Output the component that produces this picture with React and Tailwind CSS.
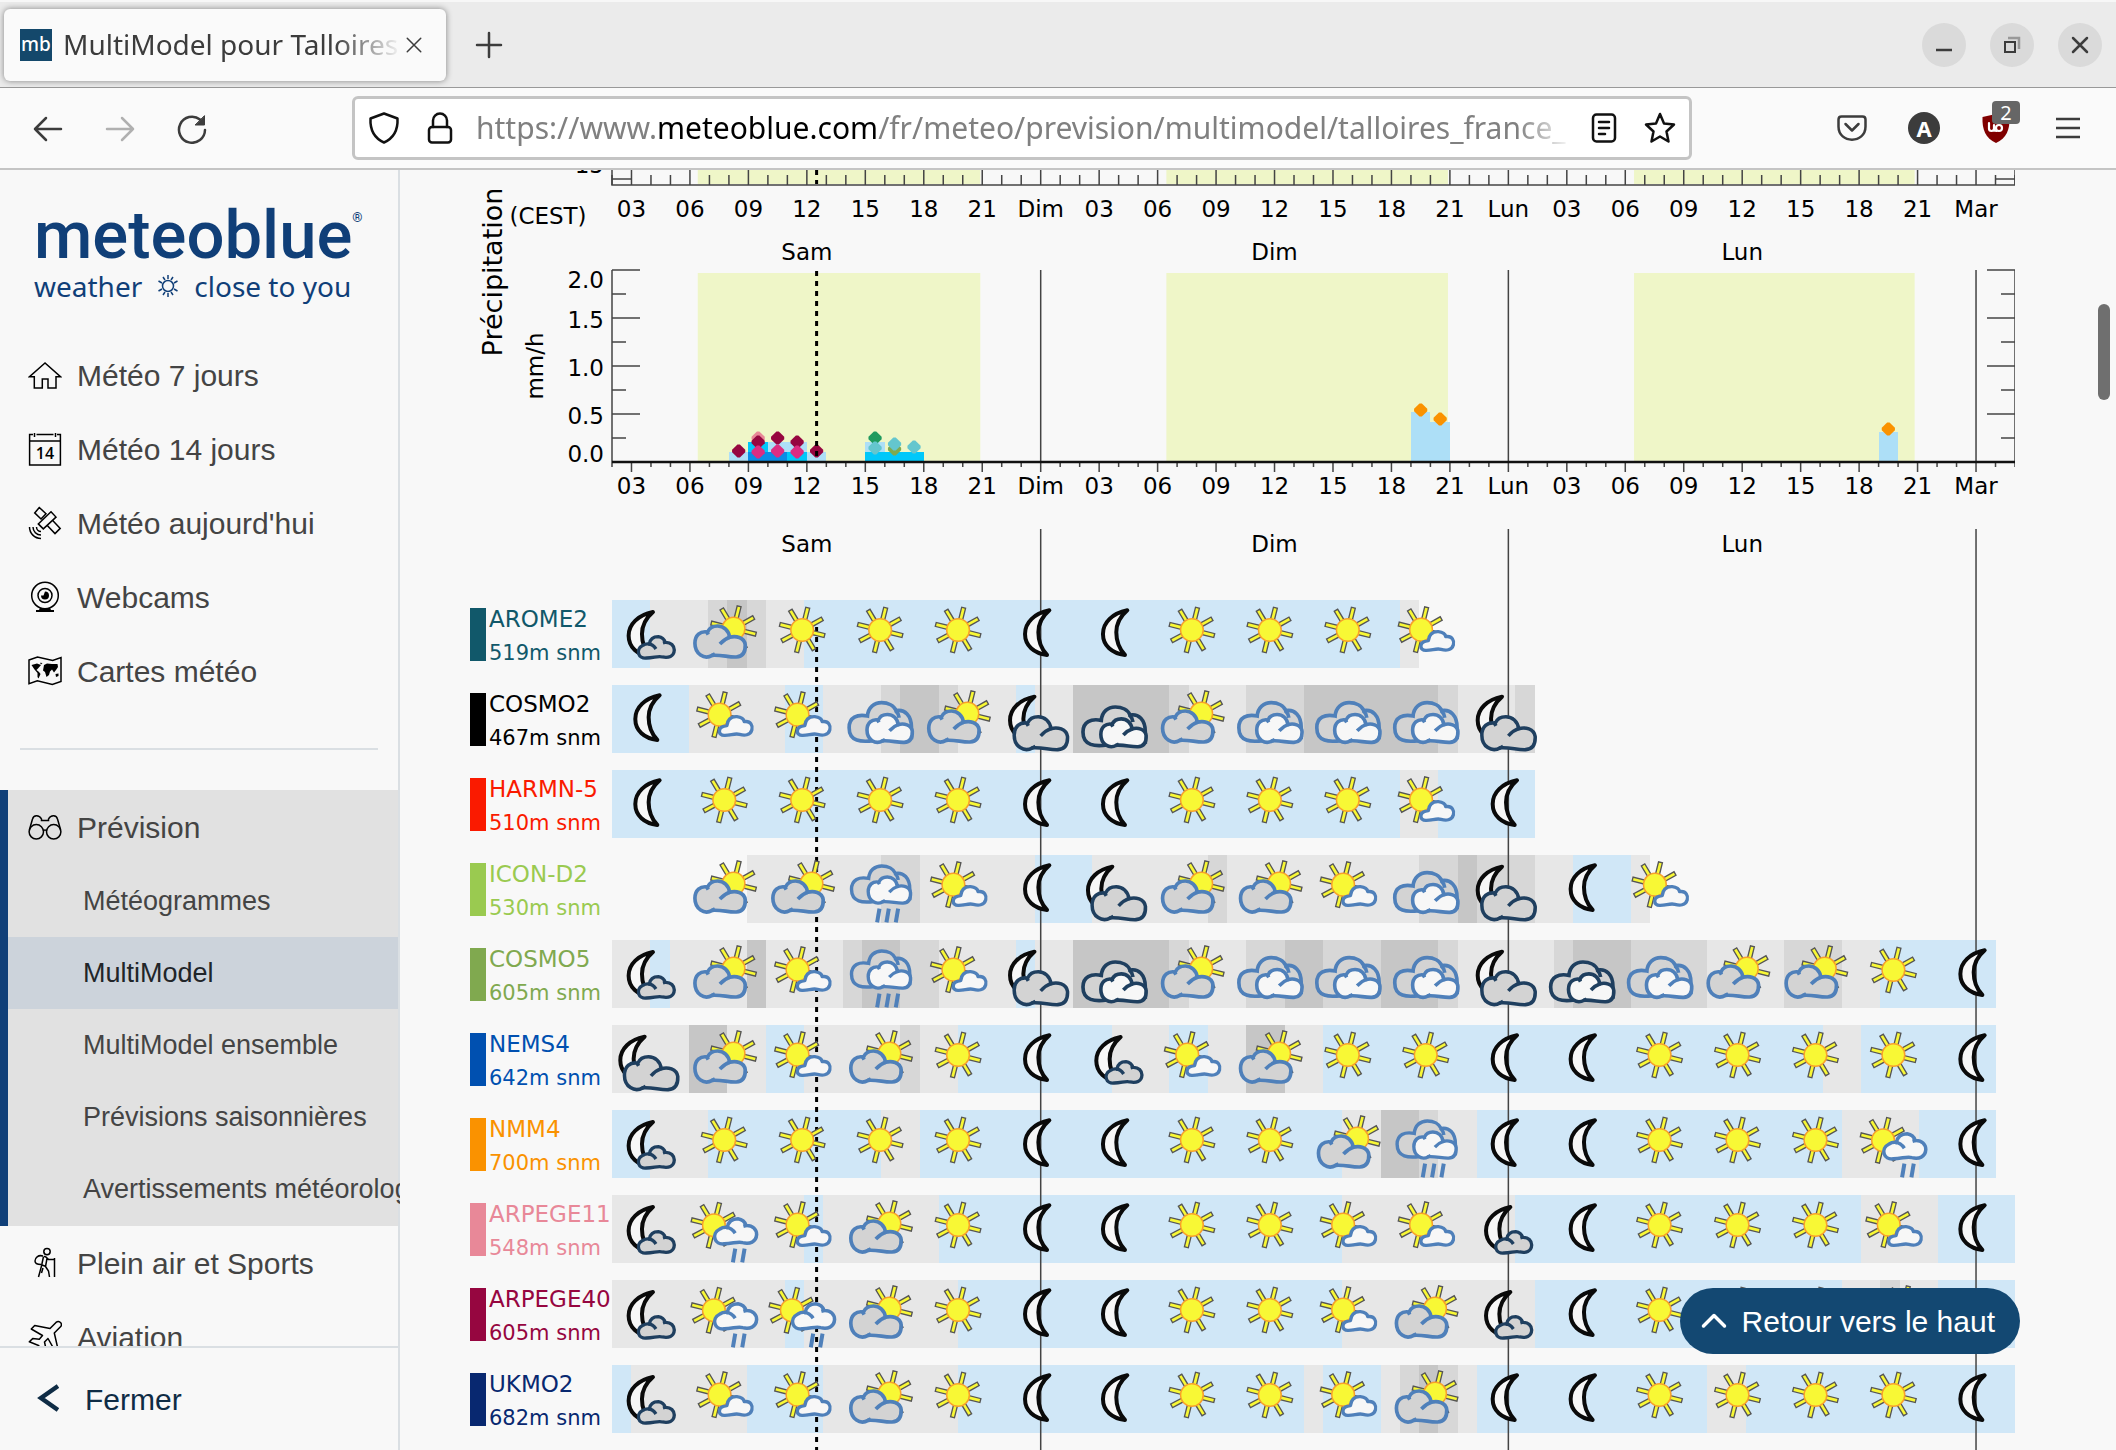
import React from "react";

const HOUR = 1403 / 72;
const hx = (h) => 142 + (h - 2) * HOUR;

const SKY = {
  B: "bg-[#d0e7f7]",
  L: "bg-[#e7e7e7]",
  M: "bg-[#d7d7d7]",
  D: "bg-[#c6c6c6]",
  N: "bg-transparent",
};

const MODELS = [
  { name: "AROME2", alt: "519m snm", text: "text-[#11586a]", fill: "bg-[#11586a]",
    sky: "B2 L5 M6 D7 M8 L10 B41 L42", icons: "mc cs s s s m m s s s sc" },
  { name: "COSMO2", alt: "467m snm", text: "text-black", fill: "bg-black",
    sky: "B4 L9 B11 L14 M15 D17 M18 L21 B22 L24 D29 M30 L33 M36 D43 M44 L47 M48",
    icons: "m sc sc oc cs Mc on cs oc oc oc Mc" },
  { name: "HARMN-5", alt: "510m snm", text: "text-[#fa1a00]", fill: "bg-[#fa1a00]",
    sky: "B41 L43 B48", icons: "m s s s s m m s s s sc m" },
  { name: "ICON-D2", alt: "530m snm", text: "text-[#9aca50]", fill: "bg-[#9aca50]",
    sky: "N7 L14 M16 L22 B25 L31 M32 L42 M44 D45 M48 L50 B53 L54",
    icons: "- cs cs r sc m Mc cs cs sc oc Mc m sc" },
  { name: "COSMO5", alt: "605m snm", text: "text-[#80a94f]", fill: "bg-[#80a94f]",
    sky: "L2 B3 L7 D8 L12 M13 D15 M17 L21 B22 L24 D29 M30 L33 M35 D37 M40 D43 M44 L49 M50 D53 M57 L61 M64 L66 B72",
    icons: "mc cs sc r sc Mc on cs oc oc oc Mc on oc cs cs s m" },
  { name: "NEMS4", alt: "642m snm", text: "text-[#0050b0]", fill: "bg-[#0050b0]",
    sky: "L4 D6 L8 B10 L15 M16 L18 B26 L29 B31 L33 D35 L37 B63 L65 B72",
    icons: "Mc cs sc cs s m mc sc cs s s m m s s s s m" },
  { name: "NMM4", alt: "700m snm", text: "text-[#fa9200]", fill: "bg-[#fa9200]",
    sky: "B2 L5 B14 L16 B38 L40 D42 M43 L45 B64 L68 B72",
    icons: "mc s s s s m m s s cs r m m s s s sr m" },
  { name: "ARPEGE11", alt: "548m snm", text: "text-[#e88898]", fill: "bg-[#e88898]",
    sky: "L10 B11 L17 B38 L47 B65 L69 B73",
    icons: "mc sr sc cs s m m s s sc sc mc m s s s sc m" },
  { name: "ARPEGE40", alt: "605m snm", text: "text-[#960640]", fill: "bg-[#960640]",
    sky: "L9 B10 L18 B38 L48 B64 L66 M67 L69 B73",
    icons: "mc sr sr cs s m m s s sc cs mc m s s s cs m" },
  { name: "UKMO2", alt: "682m snm", text: "text-[#082870]", fill: "bg-[#082870]",
    sky: "B1 L7 B11 L18 B36 L37 B40 L41 M42 D43 M44 L45 B57 L59 B73",
    icons: "mc sc sc cs s m m s s sc cs m m s s s s m" },
];

/* Weather pictograms: drawn in a 200-unit grid, one third of a pixel per unit. */
const DAY = "#4f80ba";
const NIGHT = "#1f3f5f";

const Sun = ({ x = 0, y = 0 }) => (
  <g transform={`translate(${x} ${90 + y})`}>
    {[14, 61, 104, 149, 194, 242, 284, 329].map((a) => (
      <rect key={a} x="-6" y="-69" width="12" height="38" transform={`rotate(${a})`} fill="#f8f835" stroke="#555" strokeWidth="4" />
    ))}
    <circle r="34" fill="#f8f835" stroke="#f9a12a" strokeWidth="4.5" />
  </g>
);
const Moon = ({ x = 0, y = 0 }) => (
  <path
    transform={`translate(${x} ${y})`}
    d="M40 31C-4 40-33 67-33 102C-33 137-6 160 33 165C16 147 7 122 7 97C7 72 18 50 40 31Z"
    fill="#f7f7f7" stroke="#0a0a0a" strokeWidth="12" strokeLinejoin="round"
  />
);
const BigCloud = ({ t, stroke, fill = "#d3d3d3", w = 11 }) => (
  <g transform={t} fill={fill} stroke={stroke} strokeWidth={w} strokeLinecap="butt" strokeLinejoin="round">
    <path d="M-36 166C-60 180-88 162-88 130C-88 106-72 92-50 96C-44 82-32 78-20 78C-2 78 14 91 16 112C34 106 60 112 63 134C64 158 56 170 36 171C12 172-8 164-36 166Z" />
    <path d="M18 111C6 115-4 122-13 132M-53 95L-48 104M-38 167L-28 162" fill="none" />
  </g>
);
const CurlCloud = ({ t, stroke, fill, w }) => (
  <g transform={t} fill={fill} stroke={stroke} strokeWidth={w} strokeLinejoin="round">
    <path d="M1 174C-24 178-34 148-10 136C-4 132 4 131 9 132C12 115 24 110 36 110C48 112 54 118 57 127C74 126 84 138 84 150C83 170 66 175 48 171C36 167 22 174 1 174Z" />
    <path d="M6 132C16 132 24 139 29 147M50 129L60 126" fill="none" />
  </g>
);
const SmallCloud = () => (
  <path
    d="M2 151C-20 153-22 124 8 122C10 102 22 94 38 95C50 96 58 100 60 110C80 106 86 124 83 134C78 152 60 152 46 148C32 144 20 151 2 151Z"
    fill="#f7f7f7" stroke={DAY} strokeWidth="10" strokeLinejoin="round"
  />
);
const Overcast = ({ t, stroke }) => (
  <g transform={t}>
    <g fill="#d3d3d3" stroke={stroke} strokeWidth="11">
      <path d="M-20 167C-56 172-93 170-93 128C-93 97-69 87-38 93C-36 67-18 53 4 53C24 53 42 62 48 77C74 72 94 92 94 127L94 158Z" />
      <path d="M46 76C53 83 56 90 57 98" fill="none" />
    </g>
    <BigCloud t="translate(29 129) scale(.9) translate(12 -123)" stroke={stroke} fill="#f7f7f7" w="12" />
  </g>
);
const Rain = ({ xs }) => (
  <g stroke={DAY} strokeWidth="12">
    {xs.map((x) => <path key={x} d={`M${x} 161l-7 41`} />)}
  </g>
);

const ICONS = {
  s: <Sun />,
  m: <Moon />,
  sc: <><Sun x={-14} y={-1} /><SmallCloud /></>,
  cs: <><Sun x={28} y={-4} /><BigCloud stroke={DAY} /></>,
  mc: <><Moon x={-20} y={5} /><CurlCloud stroke={NIGHT} fill="#d3d3d3" w="10" /></>,
  Mc: <><Moon x={-45} y={4} /><BigCloud t="translate(15 143) scale(1.06) translate(12 -123)" stroke={NIGHT} w="10" /></>,
  oc: <Overcast stroke={DAY} />,
  on: <Overcast stroke={NIGHT} t="translate(0 13)" />,
  r: <><Overcast stroke={DAY} t="translate(2 88) scale(.935) translate(-1 -112)" /><Rain xs={[-2, 26, 54]} /></>,
  sr: <><Sun x={-31} y={1} /><CurlCloud t="translate(34 109) scale(1.17) translate(-30 -142)" stroke={DAY} fill="#f7f7f7" w="9" /><Rain xs={[33, 61]} /></>,
};

function ModelRow({ model }) {
  let prev = 0;
  const segments = model.sky.split(" ").map((s) => {
    const end = Number(s.slice(1));
    const seg = { tone: s[0], span: end - prev, end };
    prev = end;
    return seg;
  });
  return (
    <li className="flex h-[85px] items-start">
      <div className="flex w-[142px] shrink-0 whitespace-nowrap">
        <span className={`mt-2 mr-[3px] h-[53px] w-4 shrink-0 ${model.fill}`} />
        <p className={`mt-0.5 leading-[34px] ${model.text}`}>
          <span className="block text-[23px]">{model.name}</span>
          <span className="block text-[21px]">{model.alt}</span>
        </p>
      </div>
      <div className="relative h-[68px] flex-1">
        <div className="flex h-full">
          {segments.map((s) => (
            <span key={s.end} className={SKY[s.tone]} style={{ width: `${(s.span / 73) * 100}%` }} />
          ))}
        </div>
        <svg viewBox="0 0 1403 68" className="absolute inset-0 z-20 h-full w-full overflow-visible" aria-hidden="true">
          {model.icons.split(" ").map((id, i) => (
            <g key={i} transform={`translate(${34.3 + i * HOUR * 4} 0) scale(.3333)`}>{ICONS[id]}</g>
          ))}
        </svg>
      </div>
    </li>
  );
}

const HOURS = Array.from({ length: 73 }, (_, i) => i + 2);
const DAY_NAMES = { 24: "Dim", 48: "Lun", 72: "Mar" };
const hourLabel = (h) => DAY_NAMES[h] || String(h % 24).padStart(2, "0");
const DAYLIGHT = [[6.4, 20.9], [30.45, 44.9], [54.45, 68.85]];
const BARS = [
  [8, 10, "#addff7"], [9, 20, "#00c8fa"], [10, 20, "#addff7"], [11, 20, "#addff7"],
  [9, 10, "#0a8ce6"], [10, 10, "#0a8ce6"], [11, 10, "#00c8fa"], [12, 10, "#addff7"],
  [15, 20, "#addff7"], [15, 10, "#00c8fa"], [16, 10, "#00c8fa"], [17, 10, "#00c8fa"],
  [43, 50, "#addff7"], [44, 40, "#addff7"], [67, 30, "#addff7"],
];
const POINTS = [
  [8.5, 281, "#960640"], [9.5, 268, "#e88898"], [9.5, 272, "#960640"], [9.5, 282, "#dc2d82"],
  [10.5, 268, "#960640"], [10.5, 281, "#dc2d82"], [11.5, 272, "#960640"], [11.5, 282, "#dc2d82"],
  [12.5, 281, "#960640"], [15.5, 268, "#1f9a5f"], [15.5, 278, "#64c6ce"], [16.5, 279, "#80a94f"],
  [16.5, 274, "#64c6ce"], [17.5, 277, "#64c6ce"],
  [43.5, 240, "#fa9200"], [44.5, 249, "#fa9200"], [67.5, 259, "#fa9200"],
];

function PrecipitationChart() {
  return (
    <svg viewBox="0 0 1545 430" className="block w-full" fontSize="23" role="img" aria-label="Précipitation">
      {DAYLIGHT.map(([a, b]) => (
        <g key={a} fill="#eff6c8">
          <rect x={hx(a)} y="0" width={(b - a) * HOUR} height="14" />
          <rect x={hx(a)} y="103" width={(b - a) * HOUR} height="188" />
        </g>
      ))}
      {BARS.map(([h, v, c], i) => (
        <rect key={i} x={hx(h)} y={292 - v} width={HOUR} height={v} fill={c} shapeRendering="crispEdges" />
      ))}
      {POINTS.map(([h, y, c], i) => (
        <path key={i} transform={`translate(${hx(h)} ${y})`} d="M-1.2-6.6H1.2L6.6-1.2V1.2L1.2 6.6H-1.2L-6.6 1.2V-1.2Z" fill={c} />
      ))}
      <path d={`M${hx(12.5)} 0V14M${hx(12.5)} 101V292`} stroke="#000" strokeWidth="3" strokeDasharray="5 5" />
      <g stroke="#444" strokeWidth="1.5" fill="none">
        <path d="M142 0V15H1545V0M142 9H162M1525 9H1545" />
        {HOURS.map((h) => (
          <path key={h} d={h % 3 ? `M${hx(h)} 5V15M${hx(h)} 292V297` : `M${hx(h)} 0V15M${hx(h)} 292V302`} />
        ))}
        <path d="M142 100V292M1545 100V292" />
        {[100, 124, 148, 172, 196, 220, 244, 268].map((y, i) => (
          <path key={y} d={i % 2 ? `M142 ${y}H156M1531 ${y}H1545` : `M142 ${y}H170M1517 ${y}H1545`} />
        ))}
        {[24, 48, 72].map((h) => <path key={h} d={`M${hx(h)} 100V292M${hx(h)} 359V430`} />)}
      </g>
      <path d="M142 292H1545" stroke="#111" strokeWidth="2.5" />
      <g textAnchor="middle">
        {HOURS.filter((h) => h % 3 === 0).map((h) => (
          <React.Fragment key={h}>
            <text x={hx(h)} y="47">{hourLabel(h)}</text>
            <text x={hx(h)} y="324">{hourLabel(h)}</text>
          </React.Fragment>
        ))}
        {["Sam", "Dim", "Lun"].map((d, i) => (
          <React.Fragment key={d}>
            <text x={hx(12 + i * 24)} y="90">{d}</text>
            <text x={hx(12 + i * 24)} y="382">{d}</text>
          </React.Fragment>
        ))}
        <text x="78" y="54">(CEST)</text>
        <text transform="translate(32 102) rotate(-90)" fontSize="27">Précipitation</text>
        <text transform="translate(73 196) rotate(-90)">mm/h</text>
      </g>
      <g textAnchor="end">
        <text x="134" y="3">15</text>
        <text x="134" y="118">2.0</text>
        <text x="134" y="158">1.5</text>
        <text x="134" y="206">1.0</text>
        <text x="134" y="254">0.5</text>
        <text x="134" y="292">0.0</text>
      </g>
    </svg>
  );
}

function Meteogram() {
  return (
    <section className="pr-[101px] pl-[70px] font-['DejaVu_Sans',sans-serif] text-black">
      <PrecipitationChart />
      <div className="relative">
        <svg className="absolute inset-y-0 right-0 left-[142px] z-10 h-full w-[calc(100%-142px)]" aria-hidden="true">
          {["30.556%", "63.889%", "97.222%"].map((x) => (
            <line key={x} x1={x} x2={x} y1="0" y2="100%" stroke="#444" strokeWidth="1.5" />
          ))}
          <line x1="14.583%" x2="14.583%" y1="27" y2="100%" stroke="#000" strokeWidth="3" strokeDasharray="5 5" />
        </svg>
        <ul>{MODELS.map((m) => <ModelRow key={m.name} model={m} />)}</ul>
      </div>
    </section>
  );
}

const NavSvg = ({ children }) => (
  <svg viewBox="0 0 34 34" className="h-[34px] w-[34px] shrink-0" fill="none" stroke="#000" strokeWidth="1.5" aria-hidden="true">
    {children}
  </svg>
);
const NAV = {
  home: <path d="M17 5L1.5 18.7H6.3V30H14.3V21H20V30H28V18.7H32.5Z" />,
  cal: (
    <>
      <path d="M5 2.5H1.6V33H32.4V2.5H29M8.5 2.5H25.5M1.6 9H32.4M6.5 1V5M27.5 1V5" />
      <text x="17" y="26.5" textAnchor="middle" fontSize="16" fontWeight="600" fill="#000" stroke="none" className="font-['Open_Sans',sans-serif]">14</text>
    </>
  ),
  sat: (
    <path d="M11.3 1.5L6.7 6.9L13 13L18 7.7ZM23 5.8L28 11.1L15.3 22.9L10.3 17.9ZM24.7 14.5L32.2 22.4L27 27.6L19.5 19.7M8.5 21A4.5 4.5 0 0 0 13 25.5M5 21A8 8 0 0 0 13 29M1.5 21A11.5 11.5 0 0 0 13 32.5" />
  ),
  cam: (
    <>
      <circle cx="17" cy="15.5" r="13.3" />
      <circle cx="17" cy="15.5" r="7" />
      <path d="M17 11.5A4 4 0 1 1 13 15.5L15.5 15.5Z" fill="#000" stroke="none" />
      <path d="M12 28H22L23 30H26V32H8V30H11Z" fill="#000" stroke="none" />
    </>
  ),
  map: (
    <>
      <path d="M1 6L9.5 3L24.7 6.5L33 3.5V27.5L24.3 30.5L9.3 26.8L1 29.7Z" />
      <path d="M3.5 11L9 9.5L13 11L10 14.5L8.5 16L11 18L12.5 20L10.5 24.5L9.5 23V19L6.5 15.5ZM16 11L19 9.5L24 10L29.5 10L30 13L28 16L26 18.5L24 15.5L22 17.5L21 21L18.5 23L17 18L15 16.5ZM27.5 20L30.5 19.5V22L28 23ZM12 8.8L14.5 9L13 10.5Z" fill="#000" stroke="none" />
    </>
  ),
  bino: (
    <>
      <circle cx="8.3" cy="21.8" r="7.2" />
      <circle cx="25.7" cy="21.8" r="7.2" />
      <path d="M1.5 19.5L4.5 9C5.5 5 11 4.5 13.5 9V10.5H20.5V9C23 4.5 28.5 5 29.5 9L32.5 19.5M15.5 20.5Q17 19.5 18.5 20.5" />
    </>
  ),
  hike: (
    <>
      <circle cx="19" cy="5.6" r="3.2" />
      <path d="M15 10C10 8.5 7 12 7 15C7 17.5 10 18.5 13 18.5M15.5 10.5L13.5 20L10.5 31M16 10.5C18 10 19 12 20.5 13.5H26.5M26.5 12V31M19 12.5L17.5 20.5L20.5 25L21.5 31M14 19L18 20.5M15 22L13.5 27" />
    </>
  ),
  plane: (
    <path d="M22 8.6L28 2.4C31 0 34.5 3 33 6.3L26.3 13L29.5 27L26.5 30L20 18.5L16.5 22L18 29L15.5 31.5L10.5 25.5L1.3 21.8L4.7 18.6L11.3 19.3L14.5 15.5L3.3 9L6.7 5.4Z" strokeLinejoin="round" />
  ),
};

const NavLink = ({ icon, children }) => (
  <a href="#" className="flex h-[74px] items-center gap-[15px] pl-7 text-[30px]">
    <NavSvg>{NAV[icon]}</NavSvg>
    {children}
  </a>
);

function Sidebar() {
  return (
    <aside className="flex w-[400px] shrink-0 flex-col overflow-hidden bg-[#f8f8f8] font-['Liberation_Sans',Arial,sans-serif] whitespace-nowrap text-[#444] shadow-[inset_-2px_0_0_#dadfe3]">
      <div className="min-h-0 flex-1 overflow-hidden">
        <a href="#" aria-label="meteoblue" className="block h-[168px] pt-[26px] pl-[34px] text-[#103f78]">
          <span className="flex items-start font-['Roboto',sans-serif] text-[67px] leading-[78px] font-medium">
            meteoblue
            <span className="mt-3 text-[13px] leading-[20px]">®</span>
          </span>
          <span className="flex items-center font-['Noto_Sans',sans-serif] text-[28px] leading-[20px]">
            weather
            <svg viewBox="0 0 24 24" className="mx-3.5 h-6 w-6" fill="none" stroke="#103f78" strokeWidth="1.5" aria-hidden="true">
              <circle cx="12" cy="12" r="5.5" />
              <path d="M12 1V5M12 19V23M2.5 7L6 9M18 15L21.5 17M2.5 17L6 15M18 9L21.5 7M7 3L9 6M15 18L17 21M17 3L15 6M9 18L7 21" />
            </svg>
            close to you
          </span>
        </a>
        <nav>
          <NavLink icon="home">Météo 7 jours</NavLink>
          <NavLink icon="cal">Météo 14 jours</NavLink>
          <NavLink icon="sat">Météo aujourd'hui</NavLink>
          <NavLink icon="cam">Webcams</NavLink>
          <NavLink icon="map">Cartes météo</NavLink>
          <hr className="mr-[22px] ml-5 mt-10 mb-10 border-t-2 border-[#dadfe3]" />
          <div className="mr-0.5 border-l-8 border-[#103f78] bg-[#e1e1e1] pb-px">
            <div className="-ml-2">
              <NavLink icon="bino">Prévision</NavLink>
            </div>
            <ul className="pt-px text-[27px] leading-[72px]">
              <li><a href="#" className="block pl-[75px]">Météogrammes</a></li>
              <li><a href="#" aria-current="page" className="block bg-[#ccd3db] pl-[75px] text-[#212529]">MultiModel</a></li>
              <li><a href="#" className="block pl-[75px]">MultiModel ensemble</a></li>
              <li><a href="#" className="block pl-[75px]">Prévisions saisonnières</a></li>
              <li><a href="#" className="block pl-[75px]">Avertissements météorologiques</a></li>
            </ul>
          </div>
          <NavLink icon="hike">Plein air et Sports</NavLink>
          <NavLink icon="plane">Aviation</NavLink>
        </nav>
      </div>
      <button type="button" className="flex h-[104px] shrink-0 items-center border-t-2 border-[#dadfe3] pl-[37px] text-[30px] text-[#0f2c45]">
        <svg viewBox="0 0 22 30" className="mr-[26px] h-[30px] w-[22px]" fill="none" stroke="#0f2c45" strokeWidth="4.5" aria-hidden="true">
          <path d="M21 2L4 14L21 26" />
        </svg>
        Fermer
      </button>
    </aside>
  );
}

const Ico = ({ children, className = "h-8 w-8", ...p }) => (
  <svg viewBox="0 0 32 32" className={className} fill="none" stroke="#3c3c3c" strokeWidth="2.5" strokeLinecap="round" strokeLinejoin="round" aria-hidden="true" {...p}>
    {children}
  </svg>
);

function BrowserChrome() {
  return (
    <header className="shrink-0 font-['Noto_Sans',sans-serif]">
      <div className="flex h-[88px] items-center border-t-2 border-b border-t-[#f7f7f7] border-b-[#999] bg-[#ebebeb] pr-[14px] pl-1">
        <div className="flex h-[72px] w-[442px] items-center rounded-md bg-[#fafafa] pr-5 pl-4 shadow-[0_0_6px_rgba(0,0,0,0.45)]">
          <span className="flex h-8 w-8 shrink-0 items-center justify-center bg-[#14486b] text-[19px] leading-none font-medium text-white">mb</span>
          <span className="ml-[11px] w-[342px] overflow-hidden mask-r-from-80% pb-0.5 text-[28px] whitespace-nowrap text-[#3c3c3c]">MultiModel pour Talloires</span>
          <button type="button" aria-label="Fermer l'onglet" className="shrink-0">
            <Ico className="h-6 w-6" strokeWidth="2"><path d="M7 7L25 25M25 7L7 25" /></Ico>
          </button>
        </div>
        <button type="button" aria-label="Nouvel onglet" className="ml-[27px]">
          <Ico strokeWidth="2.5"><path d="M16 4V28M4 16H28" /></Ico>
        </button>
        <div className="ml-auto flex gap-6">
          <button type="button" aria-label="Réduire" className="flex h-11 w-11 items-center justify-center rounded-full bg-[#dadada]">
            <Ico strokeLinecap="butt"><path d="M8 21H24" /></Ico>
          </button>
          <button type="button" aria-label="Restaurer" className="flex h-11 w-11 items-center justify-center rounded-full bg-[#dadada]">
            <Ico strokeLinecap="butt" strokeLinejoin="miter"><path d="M12 9H23V20" stroke="#999" /><path d="M9 13H19V23H9Z" strokeWidth="2" /></Ico>
          </button>
          <button type="button" aria-label="Fermer" className="flex h-11 w-11 items-center justify-center rounded-full bg-[#dadada]">
            <Ico><path d="M9 9L23 23M23 9L9 23" /></Ico>
          </button>
        </div>
      </div>
      <div className="flex h-[82px] items-center border-b-2 border-[#c4c4c4] bg-[#fafafa] pr-8 pl-8">
        <button type="button" aria-label="Précédent"><Ico><path d="M29 17H3M14 6L3 17L14 28" /></Ico></button>
        <button type="button" aria-label="Suivant" className="ml-10"><Ico stroke="#b0b0b0"><path d="M3 17H29M18 6L29 17L18 28" /></Ico></button>
        <button type="button" aria-label="Actualiser" className="ml-10">
          <Ico><path d="M29 18A13 13 0 1 1 24 7.5" /><path d="M28.5 4V13H19.5Z" fill="#3c3c3c" strokeWidth="1" /></Ico>
        </button>
        <div className="relative ml-36 flex h-16 w-[1340px] min-w-0 shrink items-center rounded-md border-[3px] border-[#c4c4c4] bg-white pr-[13px] pl-[13px]">
          <Ico stroke="#111"><path d="M16 1.5L29.5 6.5C30 17 26 26 16 30.5C6 26 2 17 2.5 6.5Z" /></Ico>
          <Ico stroke="#111" className="ml-6 h-8 w-8"><rect x="5" y="15" width="22" height="15.5" rx="3" /><path d="M9 15V8.5A7 7 0 0 1 23 8.5V15" /></Ico>
          <div className="relative ml-5 h-14 min-w-0 flex-1">
            <input type="text" aria-label="Adresse" className="absolute inset-0 h-full w-full bg-transparent outline-none" />
            <span className="pointer-events-none relative block overflow-hidden mask-r-from-95% text-[30px] leading-[56px] whitespace-nowrap text-[#808080]">
              https://www.<span className="text-black">meteoblue.com</span>/fr/meteo/prevision/multimodel/talloires_france_
            </span>
          </div>
          <button type="button" aria-label="Mode lecture" className="ml-4">
            <Ico stroke="#111"><rect x="5" y="2.5" width="22" height="27" rx="3.5" /><path d="M11 10H21M11 16H21M11 22H17" /></Ico>
          </button>
          <button type="button" aria-label="Marque-page" className="ml-6">
            <Ico stroke="#111"><path d="M16 2L20 11.5L30 12.5L22.5 19.5L24.5 29.5L16 24.5L7.5 29.5L9.5 19.5L2 12.5L12 11.5Z" /></Ico>
          </button>
        </div>
        <div className="ml-auto flex items-center gap-10">
          <button type="button" aria-label="Pocket"><Ico><path d="M5.5 4.5H26.5Q29.5 4.5 29.5 7.5V14.5C29.5 32 2.5 32 2.5 14.5V7.5Q2.5 4.5 5.5 4.5ZM9.5 12L16 18.5L22.5 12" /></Ico></button>
          <button type="button" aria-label="Compte" className="flex h-8 w-8 items-center justify-center rounded-full bg-[#3c3c3c] text-[22px] leading-none font-bold text-white">A</button>
          <button type="button" aria-label="uBlock Origin, 2" className="relative">
            <Ico stroke="none"><path d="M16 2L29.5 5C30 18 26.5 26 16 31C5.5 26 2 18 2.5 5Z" fill="#800000" /><path d="M9 11V16.5Q9 19 11.5 19T14 16.5V13M14 16.5Q14 19 16.5 19" stroke="#fff" strokeWidth="2.2" /><circle cx="19" cy="16" r="3" stroke="#fff" strokeWidth="2.2" /></Ico>
            <span className="absolute -top-[11px] left-3 flex h-[23px] w-7 items-center justify-center rounded-sm bg-[#666] text-[20px] leading-none text-white">2</span>
          </button>
          <button type="button" aria-label="Menu"><Ico strokeLinecap="butt"><path d="M4 7H28M4 16H28M4 25H28" /></Ico></button>
        </div>
      </div>
    </header>
  );
}

export default function App() {
  return (
    <div className="flex h-screen flex-col overflow-hidden bg-[#f8f8f8]">
      <BrowserChrome />
      <div className="flex min-h-0 flex-1">
        <Sidebar />
        <main className="relative min-w-0 flex-1 overflow-hidden">
          <Meteogram />
          <button type="button" className="absolute right-24 bottom-24 z-30 flex h-[66px] items-center gap-[14px] rounded-full bg-[#134872] pr-[25px] pl-5 font-['Liberation_Sans',Arial,sans-serif] text-[30px] whitespace-nowrap text-white">
            <svg viewBox="0 0 28 28" className="h-7 w-7" fill="none" stroke="#fff" strokeWidth="3.5" strokeLinecap="round" strokeLinejoin="round" aria-hidden="true">
              <path d="M3.5 19L14 8.5L24.5 19" />
            </svg>
            Retour vers le haut
          </button>
          <div className="absolute top-[134px] right-1.5 z-30 h-24 w-3 rounded-full bg-[#6f6f6f]" />
        </main>
      </div>
    </div>
  );
}
